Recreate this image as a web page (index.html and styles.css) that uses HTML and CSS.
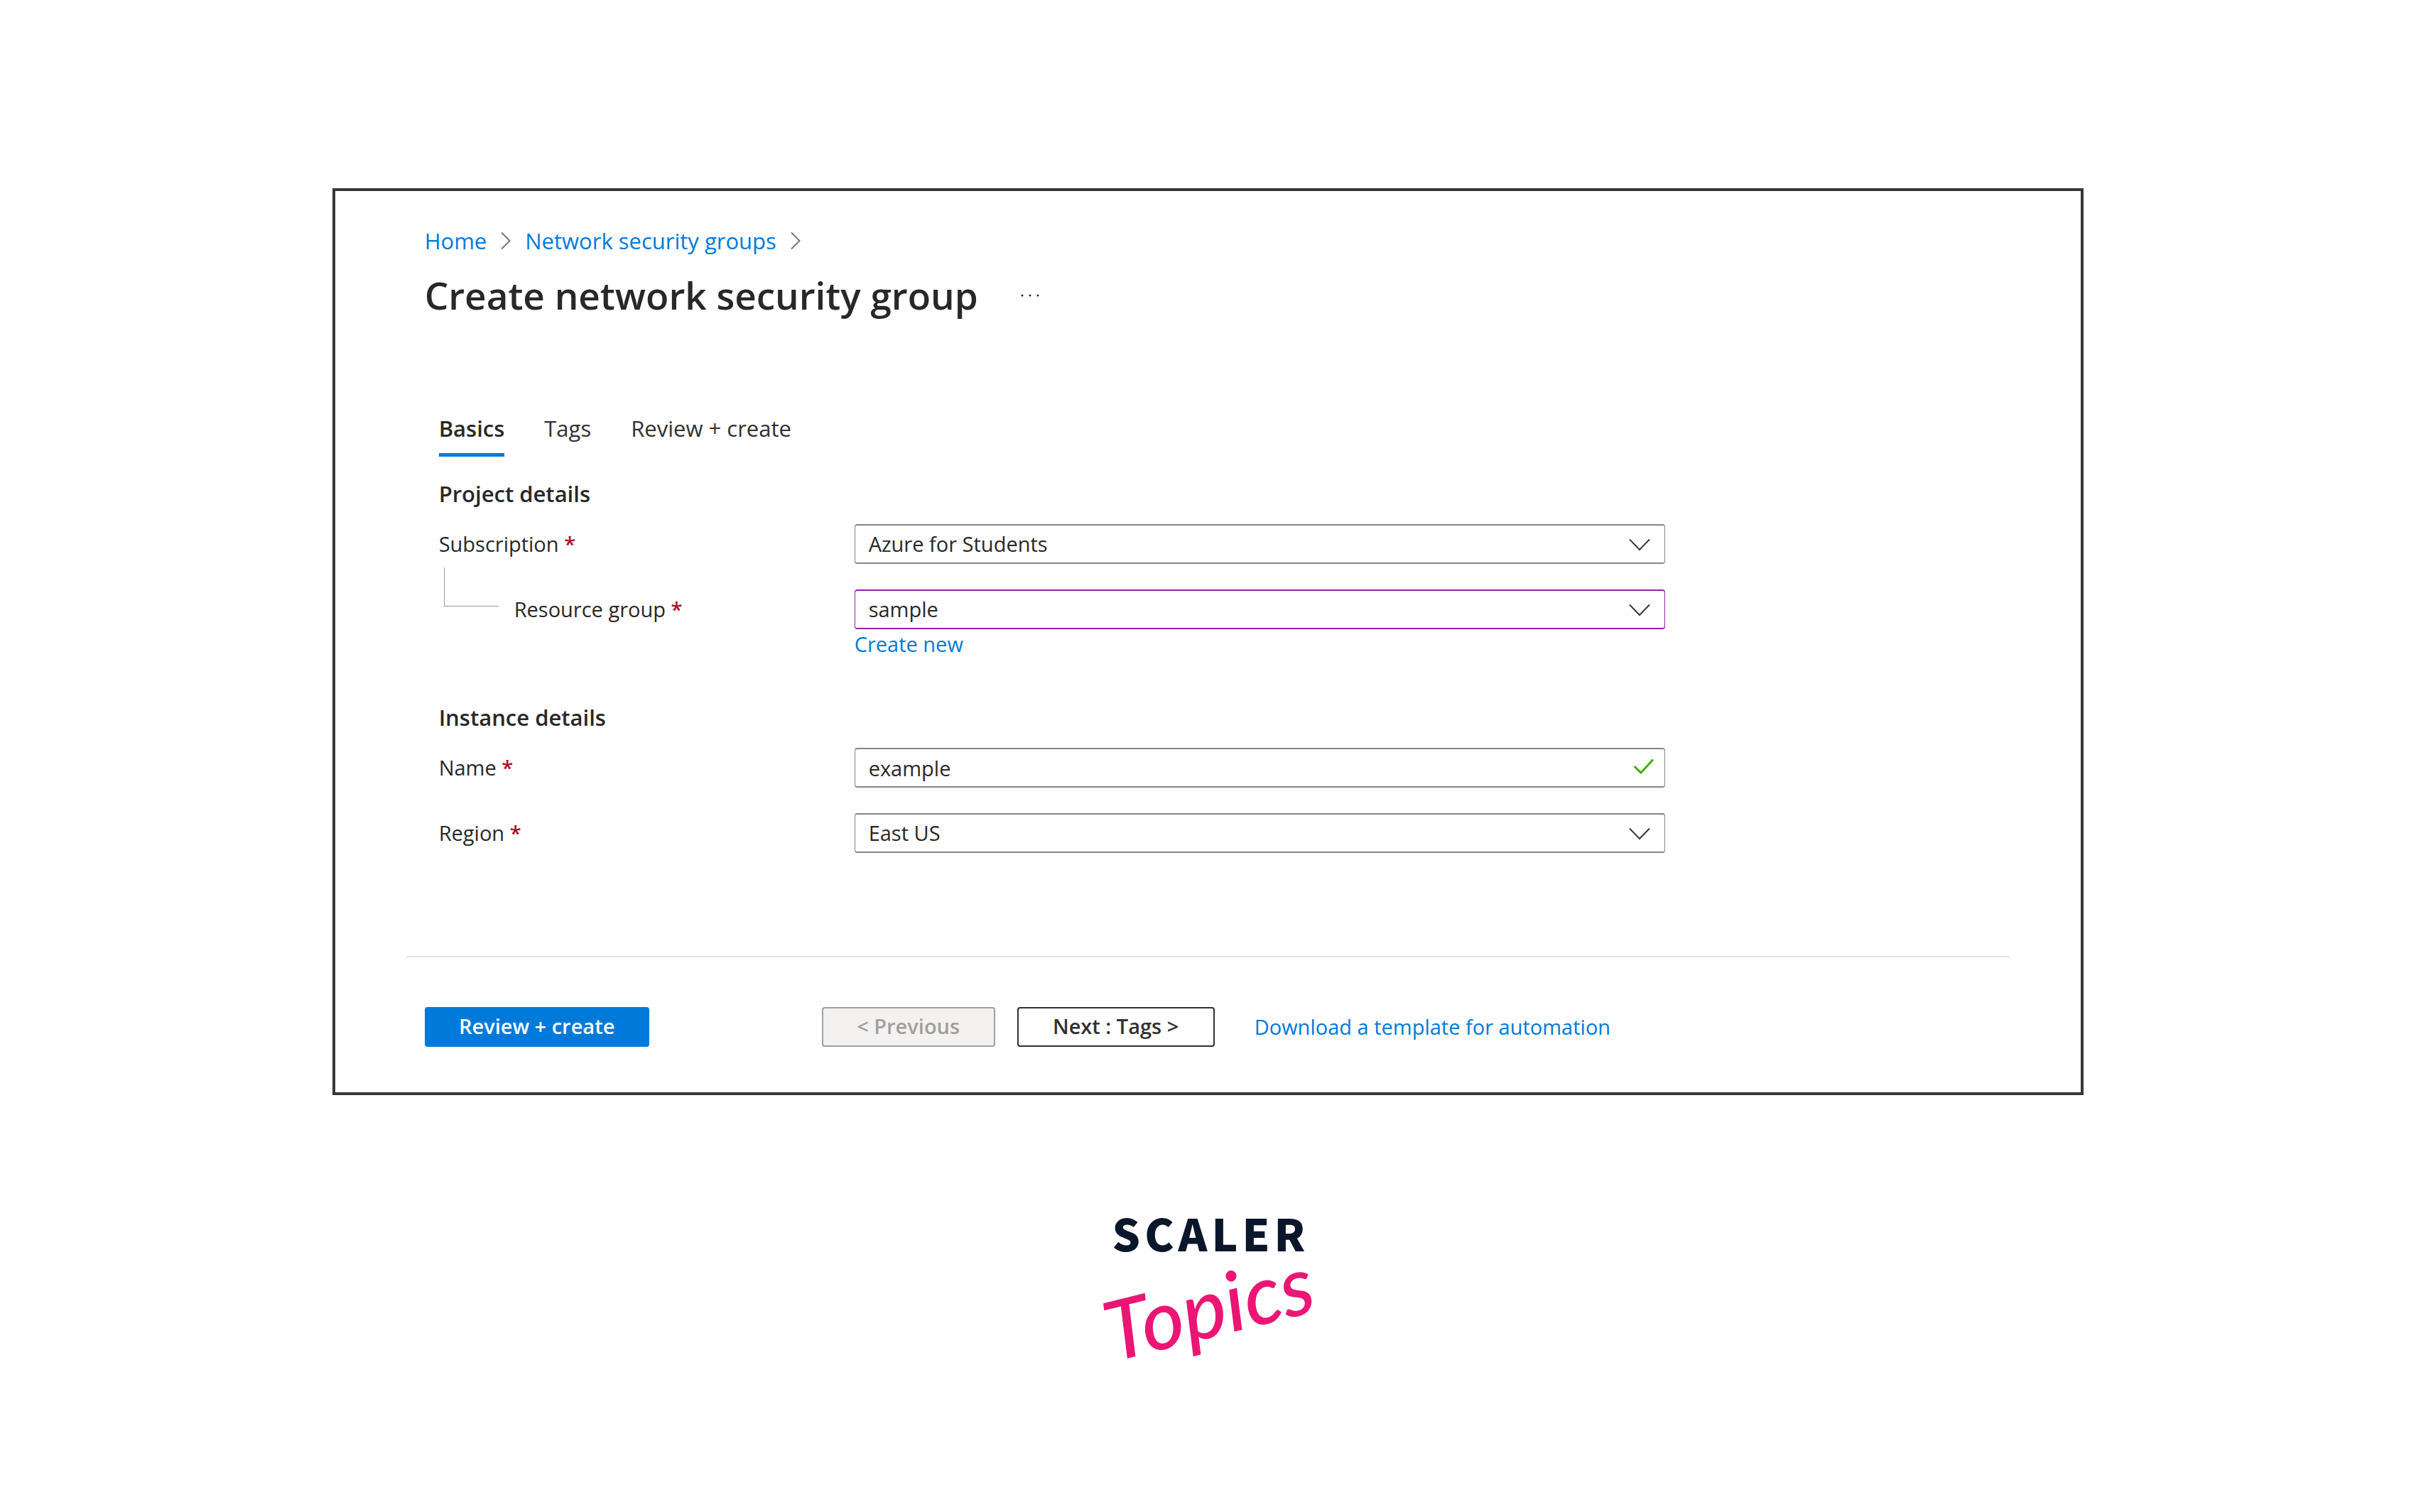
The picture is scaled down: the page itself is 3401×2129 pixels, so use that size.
FILE: index.html
```html
<!DOCTYPE html>
<html lang="en">
  <head>
    <meta charset="UTF-8" />
    <meta name="viewport" content="width=device-width, initial-scale=1.0" />
    <title>Create network security group</title>
    <link rel="stylesheet" href="styles.css">
  </head>
  <body>
    <main class="card">
      <header class="page-header">
        <nav class="breadcrumb" aria-label="Breadcrumb">
          <a href="#">Home</a>
          <svg class="crumb-arrow" viewBox="0 0 14 24"><path d="M1 0.500 L12.500 12 L1 23.500" /></svg>
          <a href="#">Network security groups</a>
          <svg class="crumb-arrow" viewBox="0 0 14 24"><path d="M1 0.500 L12.500 12 L1 23.500" /></svg>
        </nav>
        <div class="title-row">
          <h1>Create network security group</h1>
          <button type="button" class="more-btn" aria-label="More">
            <svg viewBox="0 0 26 4"><circle cx="2" cy="2" r="1.500" /><circle cx="13" cy="2" r="1.500" /><circle cx="24" cy="2" r="1.500" /></svg>
          </button>
        </div>
      </header>

      <form class="form" id="nsgForm">
        <nav class="tabs">
          <a href="#" class="tab active">Basics</a>
          <a href="#" class="tab">Tags</a>
          <a href="#" class="tab">Review + create</a>
        </nav>

        <!-- Project details -->
        <h2>Project details</h2>
        <div class="rows">
          <div class="row">
            <label for="subscription">Subscription <span class="required">*</span></label>
            <div class="field">
              <select id="subscription">
                <option>Azure for Students</option>
              </select>
              <svg class="chevron" viewBox="0 0 30 18"><path d="M1 1.500 L15 16 L29 1.500" /></svg>
            </div>
          </div>
          <div class="row">
            <label for="resourceGroup" class="nested">Resource group <span class="required">*</span></label>
            <div class="field">
              <select id="resourceGroup" class="edited">
                <option>sample</option>
              </select>
              <svg class="chevron" viewBox="0 0 30 18"><path d="M1 1.500 L15 16 L29 1.500" /></svg>
            </div>
            <a href="#" class="create-new">Create new</a>
          </div>
        </div>

        <!-- Instance details -->
        <h2 class="instance">Instance details</h2>
        <div class="rows">
          <div class="row">
            <label for="nsgName">Name <span class="required">*</span></label>
            <div class="field">
              <input type="text" id="nsgName" value="example" />
              <svg class="check" viewBox="0 0 30 22"><path d="M1.500 11 L11 20 L28 1.500" /></svg>
            </div>
          </div>
          <div class="row">
            <label for="region">Region <span class="required">*</span></label>
            <div class="field">
              <select id="region">
                <option>East US</option>
              </select>
              <svg class="chevron" viewBox="0 0 30 18"><path d="M1 1.500 L15 16 L29 1.500" /></svg>
            </div>
          </div>
        </div>
      </form>

      <footer class="actions">
        <button type="submit" form="nsgForm" class="btn primary">Review + create</button>
        <button type="button" class="btn previous" disabled>&lt; Previous</button>
        <button type="button" class="btn next">Next : Tags &gt;</button>
        <a href="#">Download a template for automation</a>
      </footer>
    </main>

    <div class="logo">
      <span class="logo-scaler">SCALER</span>
      <span class="logo-topics">Topics</span>
    </div>
  </body>
</html>
```
FILE: styles.css
```css
* {
  box-sizing: border-box;
}
body {
  margin: 0;
  padding: 265px 0 120px;
  background: #fff;
  color: #292827;
  font-family: "Open Sans", "Noto Sans", sans-serif;
  font-size: 29px;
  line-height: 40px;
}
a {
  color: #007ada;
  text-decoration: none;
}
svg {
  display: block;
  fill: none;
}
.card {
  width: 72.5%;
  margin: 0 auto;
  padding: 48px 100px 64px;
  border: 4px solid #383838;
}
.page-header {
  padding-left: 26px;
}
.breadcrumb {
  display: flex;
  align-items: center;
  gap: 20px;
  font-size: 31px;
  line-height: 44px;
}
.crumb-arrow {
  width: 14px;
  height: 24px;
  stroke: #767676;
  stroke-width: 2;
}
.title-row {
  display: flex;
  align-items: center;
  gap: 60px;
  margin-top: 19px;
}
h1 {
  margin: 0;
  font-size: 53px;
  font-weight: 600;
  line-height: 72px;
}
.more-btn {
  padding: 0;
  border: none;
  background: none;
}
.more-btn svg {
  width: 26px;
  height: 4px;
  fill: #292827;
}
.form {
  padding-left: 46px;
}
.tabs {
  display: flex;
  gap: 56px;
  margin-top: 131px;
  font-size: 31px;
}
.tab {
  padding-bottom: 15px;
  border-bottom: 5px solid transparent;
  color: #323130;
}
.tab.active {
  border-color: #007ada;
  color: #292827;
  font-weight: 600;
}
h2 {
  margin: 32px 0 23px;
  font-size: 31px;
  font-weight: 600;
  line-height: 40px;
}
h2.instance {
  margin-top: 63px;
}
.rows {
  display: grid;
  gap: 36px;
}
.row {
  display: grid;
  grid-template-columns: 585px minmax(0, 1141px);
  align-items: center;
}
.required {
  color: #b3092a;
  font-weight: 600;
}
.nested {
  position: relative;
  padding-left: 106px;
}
/* line that ties the resource group to the subscription */
.nested::before {
  content: "";
  position: absolute;
  left: 7px;
  bottom: 24px;
  width: 76px;
  height: 54px;
  border-left: 1px solid #999;
  border-bottom: 1px solid #999;
}
.field {
  position: relative;
}
select,
input {
  display: block;
  width: 100%;
  height: 56px;
  padding: 0 60px 0 19px;
  border: 1px solid #858585;
  border-width: 2px 1px;
  border-radius: 4px;
  background: #fff;
  color: #292827;
  font: inherit;
  appearance: none;
}
select.edited {
  border-color: #9321a7;
}
.chevron,
.check {
  position: absolute;
  pointer-events: none;
}
.chevron {
  top: 20px;
  right: 21px;
  width: 30px;
  height: 18px;
  stroke: #3b3a39;
  stroke-width: 2;
}
.check {
  top: 15px;
  right: 15px;
  width: 30px;
  height: 22px;
  stroke: #3fae00;
  stroke-width: 3;
}
.create-new {
  grid-column: 2;
  justify-self: start;
  margin-top: 1px;
}
.actions {
  display: flex;
  align-items: center;
  margin-top: 145px;
  padding: 70px 0 0 26px;
  border-top: 2px solid #e1e1e1;
}
.btn {
  height: 56px;
  padding: 0 0 2px;
  border: 2px solid #323130;
  border-radius: 4px;
  background: #fff;
  color: #323130;
  font: inherit;
  font-weight: 600;
}
.btn.primary {
  width: 316px;
  border-color: #007ada;
  background: #007ada;
  color: #fff;
}
.btn.previous {
  width: 244px;
  margin-left: 243px;
  border-color: #a19f9d;
  background: #f3f2f1;
  color: #a19f9d;
}
.btn.next {
  width: 278px;
  margin: 0 56px 0 31px;
}
.logo {
  display: flex;
  flex-direction: column;
  align-items: center;
  margin-top: 161px;
}
.logo-scaler {
  padding-left: 8px;
  color: #0a1629;
  font-family: "Noto Sans CJK JP", sans-serif;
  font-size: 62px;
  font-weight: 900;
  letter-spacing: 6px;
  line-height: 64px;
}
.logo-topics {
  margin-top: 12px;
  color: #eb1674;
  font-family: Lato, sans-serif;
  font-size: 116px;
  font-style: italic;
  font-weight: 500;
  line-height: 120px;
  transform: rotate(-14deg);
}
```
